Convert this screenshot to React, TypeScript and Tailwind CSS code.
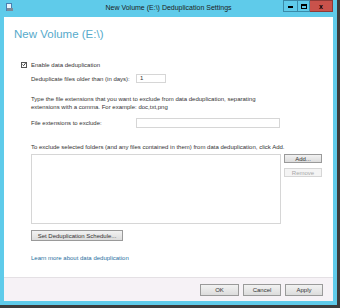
import React from "react"

const font = "font-['Segoe_UI','Liberation_Sans',Arial,sans-serif]"

const Btn = ({ label, disabled = false, className = "" }: { label: string; disabled?: boolean; className?: string }) => (
  <div
    className={`flex items-center justify-center border text-[6px] leading-none ${
      disabled
        ? "border-[#d6d6d6] bg-[#f4f4f4] text-[#a8a8a8]"
        : "border-[#9a9a9a] bg-gradient-to-b from-[#f2f2f2] to-[#dcdcdc] text-[#333]"
    } ${className}`}
  >
    {label}
  </div>
)

const App = () => {
  return (
    <div className={`w-[340px] h-[308px] bg-[#3c3c3c] pr-[3px] pb-[3px] ${font}`}>
      {/* WINDOW FRAME */}
      <div className="w-full h-full bg-[#5fcbea] flex flex-col px-[4px] pb-[4px]">
        {/* TITLE BAR */}
        <div className="h-[17px] flex items-start relative">
          <div className="mt-[3px] ml-[1px] w-[9px] h-[9px] relative">
            <div className="absolute left-[1px] top-0 w-[6px] h-[8px] bg-[#e8f4fb] border border-[#4a7fb0]" />
            <div className="absolute left-[2px] top-[5px] w-[6px] h-[3px] bg-[#7a8a9a]" />
          </div>
          <div className="absolute left-0 right-0 top-[3px] text-center text-[7px] leading-[9px] text-[#1c1c1c]">
            New Volume (E:\) Deduplication Settings
          </div>
          <div className="ml-auto flex h-[12px] relative z-10">
            <div className="w-[14px] h-full border border-[#3a8aa8] border-r-0 flex items-end justify-center pb-[3px]">
              <div className="w-[5px] h-[2px] bg-black" />
            </div>
            <div className="w-[13px] h-full border border-[#3a8aa8] flex items-center justify-center">
              <div className="w-[6px] h-[5px] border border-black border-t-2" />
            </div>
            <div className="w-[23px] h-full bg-[#c9524b] border border-[#8e3a36] border-l-0 flex items-center justify-center text-[7px] font-bold text-black leading-none">
              x
            </div>
          </div>
        </div>

        {/* CLIENT AREA */}
        <div className="flex-1 bg-white flex flex-col">
          <div className="flex-1 pl-[10px] pr-[11px]">
            <div className="mt-[9px] text-[11.5px] leading-[16px] text-[#56aacb]">New Volume (E:\)</div>

            <div className="mt-[19px] ml-[7px] flex items-center h-[7px]">
              <div className="w-[6px] h-[6px] border border-[#555] flex items-center justify-center">
                <svg width="5" height="5" viewBox="0 0 5 5">
                  <path d="M0.6 2.5 L2 3.9 L4.5 0.8" fill="none" stroke="#111" strokeWidth="1" />
                </svg>
              </div>
              <span className="ml-[4px] text-[6px] leading-none text-[#333]">Enable data deduplication</span>
            </div>

            <div className="pl-[17px]">
              <div className="mt-[6px] flex items-center h-[9px]">
                <span className="w-[105px] text-[6px] leading-none text-[#333]">Deduplicate files older than (in days):</span>
                <div className="w-[30px] h-[9px] border border-[#d6d6d6] text-[6px] leading-[7px] pl-[3px] text-[#333]">1</div>
              </div>

              <div className="mt-[12px] text-[6px] leading-[8px] text-[#333]">
                Type the file extensions that you want to exclude from data deduplication, separating
                <br />
                extensions with a comma. For example: doc,txt,png
              </div>

              <div className="mt-[7px] flex items-center h-[10px]">
                <span className="w-[105px] text-[6px] leading-none text-[#333]">File extensions to exclude:</span>
                <div className="w-[144px] h-[10px] border border-[#d6d6d6]" />
              </div>

              <div className="mt-[15px] text-[6px] leading-[8px] text-[#333]">
                To exclude selected folders (and any files contained in them) from data deduplication, click Add.
              </div>

              <div className="mt-[3px] flex gap-[3px]">
                <div className="w-[250px] h-[70px] border border-[#d6d6d6]" />
                <div className="flex flex-col gap-[5px]">
                  <Btn label="Add..." className="w-[38px] h-[9px]" />
                  <Btn label="Remove" disabled className="w-[38px] h-[9px]" />
                </div>
              </div>

              <Btn label="Set Deduplication Schedule..." className="mt-[6px] w-[92px] h-[11px]" />

              <div className="mt-[13px] text-[6px] leading-[8px] text-[#1f6fa0]">Learn more about data deduplication</div>
            </div>
          </div>

          {/* FOOTER */}
          <div className="h-[24px] bg-[#f6f2f6] border-t border-[#e4e0e4] flex items-center justify-end gap-[4px] pr-[10px]">
            <Btn label="OK" className="w-[39px] h-[12px]" />
            <Btn label="Cancel" className="w-[38px] h-[12px]" />
            <Btn label="Apply" className="w-[38px] h-[12px]" />
          </div>
        </div>
      </div>
    </div>
  )
}

export default App
